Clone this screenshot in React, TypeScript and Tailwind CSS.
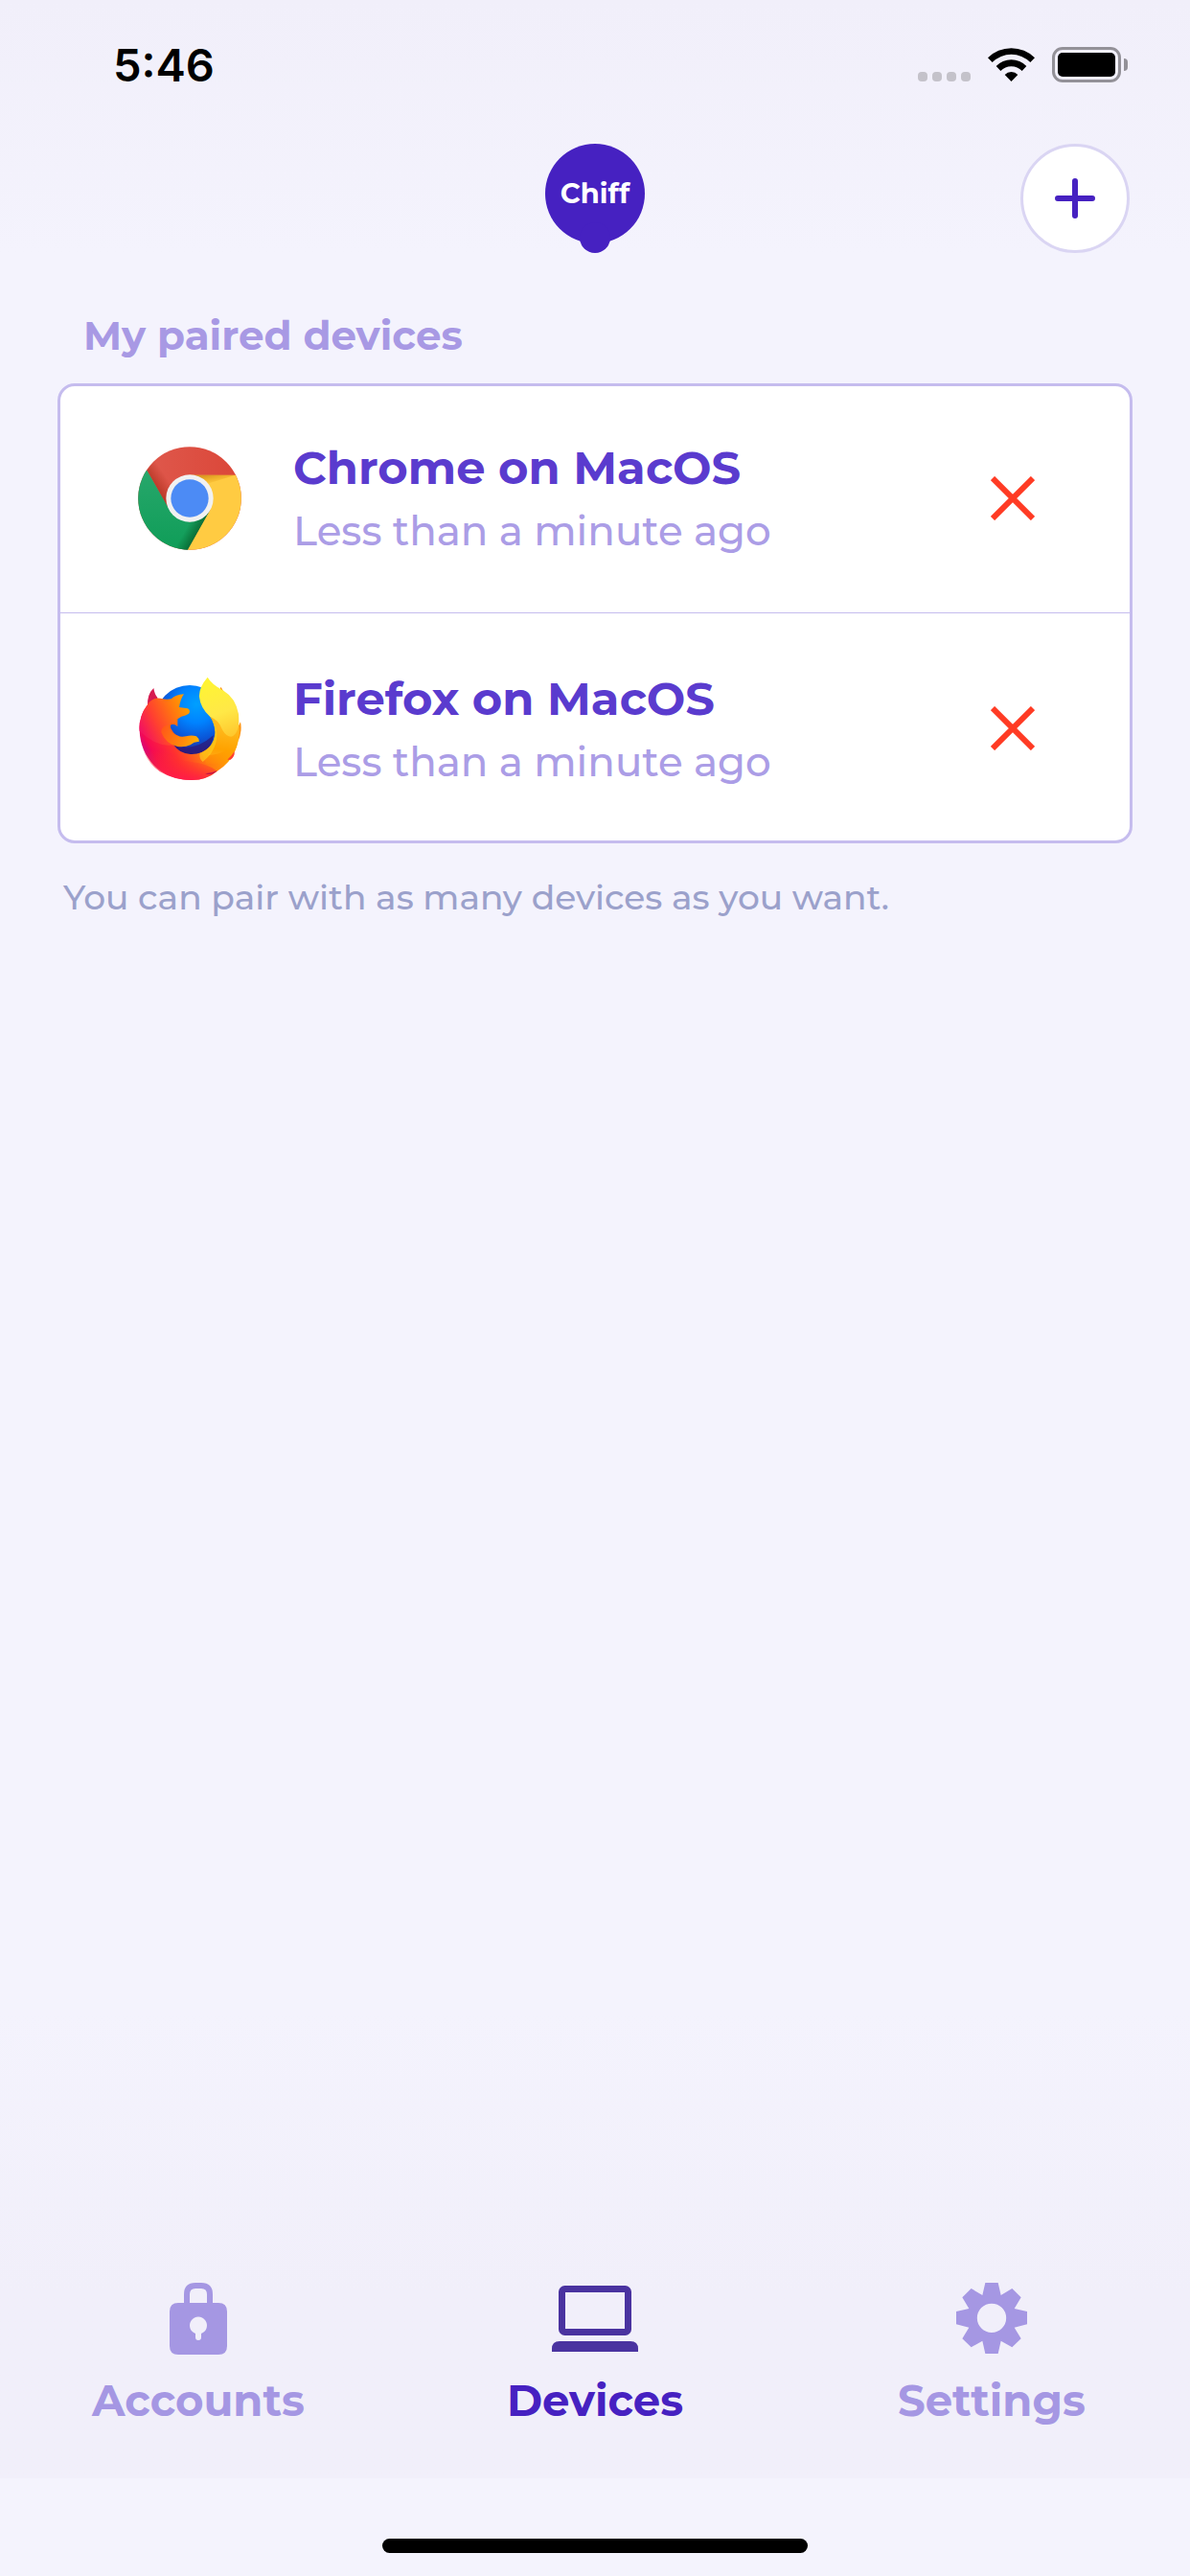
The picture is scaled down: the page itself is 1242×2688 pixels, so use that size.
import React from "react";

function WifiIcon() {
  return (
    <svg aria-hidden="true" className="h-9 w-[49px]" viewBox="393 87 147 108">
      <path d="M393 121 A104 104 0 0 1 540 121 L526 135 A84 84 0 0 0 407 135 Z" />
      <path d="M419 147 A66 66 0 0 1 514 147 L500 162 A47 47 0 0 0 433 162 Z" />
      <path d="M446 174 A28 28 0 0 1 487 174 L466.500 195 Z" />
    </svg>
  );
}

function StatusBar() {
  return (
    <div className="flex h-[150px] items-start justify-between pt-[38px] pr-[65px] pl-[118px] font-[Inter,sans-serif] text-black">
      <time className="text-[47px] leading-[60px] font-semibold">5:46</time>
      <div className="flex items-start gap-[18px] pt-[11px]">
        <div className="flex h-9 items-end gap-[5px]">
          <span className="size-[10px] rounded-[4px] bg-[#c4c2ca]" />
          <span className="size-[10px] rounded-[4px] bg-[#c4c2ca]" />
          <span className="size-[10px] rounded-[4px] bg-[#c4c2ca]" />
          <span className="size-[10px] rounded-[4px] bg-[#c4c2ca]" />
        </div>
        <WifiIcon />
        <div className="flex items-center gap-[3px]">
          <div className="h-[37px] w-[72px] rounded-[11px] border-[3px] border-[#939198] p-[3px]">
            <div className="size-full rounded-[5px] bg-black" />
          </div>
          <div className="h-[13px] w-1 rounded-r-full bg-[#939198]" />
        </div>
      </div>
    </div>
  );
}

function Logo() {
  return (
    <div className="relative flex h-[114px] w-[104px] justify-center">
      <svg aria-hidden="true" className="absolute inset-0 size-full" viewBox="0 0 104 114" fill="#4621c1">
        <circle cx="52" cy="52" r="52" />
        <circle cx="52" cy="98" r="16" />
      </svg>
      <span className="relative text-[29px] leading-[104px] font-bold text-white [font-variant-ligatures:none]">Chiff</span>
    </div>
  );
}

function Header() {
  return (
    <header className="grid grid-cols-3 items-center px-[63px]">
      <span />
      <div className="flex justify-center">
        <Logo />
      </div>
      <button
        type="button"
        aria-label="Pair a new device"
        className="flex size-[114px] items-center justify-center justify-self-end rounded-full border-[3px] border-[#dad5f3] bg-white"
      >
        <svg aria-hidden="true" className="size-[42px]" viewBox="0 0 42 42" stroke="#4621c1" strokeWidth="6" strokeLinecap="round">
          <path d="M21 3V39M3 21H39" />
        </svg>
      </button>
    </header>
  );
}

function ChromeIcon() {
  return (
    <svg aria-hidden="true" className="size-[108px]" viewBox="312 228 324 324">
      <defs>
        <clipPath id="chrome-disc">
          <circle cx="474" cy="390" r="161.500" />
        </clipPath>
        <linearGradient id="chrome-red-shade" gradientUnits="userSpaceOnUse" x1="368" y1="366" x2="410" y2="338">
          <stop offset="0" stopColor="#a52714" stopOpacity="0.7" />
          <stop offset="1" stopColor="#a52714" stopOpacity="0" />
        </linearGradient>
        <linearGradient id="chrome-green-shade" gradientUnits="userSpaceOnUse" x1="502" y1="490" x2="470" y2="472">
          <stop offset="0" stopColor="#055524" stopOpacity="0.65" />
          <stop offset="1" stopColor="#055524" stopOpacity="0" />
        </linearGradient>
        <linearGradient id="chrome-yellow-shade" gradientUnits="userSpaceOnUse" x1="540" y1="316" x2="546" y2="348">
          <stop offset="0" stopColor="#c77b12" stopOpacity="0.65" />
          <stop offset="1" stopColor="#ea9a00" stopOpacity="0" />
        </linearGradient>
        <linearGradient id="chrome-red" x1="0" y1="0" x2="1" y2="0">
          <stop offset="0" stopColor="#df5a4e" />
          <stop offset="1" stopColor="#db4638" />
        </linearGradient>
        <linearGradient id="chrome-green" x1="0" y1="0" x2="0" y2="1">
          <stop offset="0" stopColor="#27a76b" />
          <stop offset="1" stopColor="#0f9d58" />
        </linearGradient>
      </defs>
      <g clipPath="url(#chrome-disc)">
        <rect x="312" y="228" width="324" height="324" fill="url(#chrome-red)" />
        <path d="M340 302L383 250L470 310L405 417Z" fill="url(#chrome-red-shade)" />
        <path d="M340 302L405 416L474 464L538 428L467 553H300V302Z" fill="url(#chrome-green)" />
        <path d="M538 428L467 553L380 552L450 440Z" fill="url(#chrome-green-shade)" />
        <path d="M474 317H640V560H463L538 427Z" fill="#ffcb42" />
        <path d="M474 317H617L530 344L510 360Z" fill="url(#chrome-yellow-shade)" />
      </g>
      <circle cx="474" cy="390" r="74" fill="#f1f1f1" />
      <circle cx="474" cy="390" r="59" fill="#4c8bf5" />
    </svg>
  );
}

function FirefoxIcon() {
  return (
    <svg aria-hidden="true" className="size-[108px]" viewBox="72 78 324 324">
      <defs>
        <radialGradient id="fox-globe" gradientUnits="userSpaceOnUse" cx="255" cy="165" r="165">
          <stop offset="0" stopColor="#00a0ff" />
          <stop offset="0.35" stopColor="#0083ff" />
          <stop offset="0.65" stopColor="#0a56d8" />
          <stop offset="1" stopColor="#2b2185" />
        </radialGradient>
        <linearGradient id="fox-body" gradientUnits="userSpaceOnUse" x1="100" y1="350" x2="350" y2="210">
          <stop offset="0" stopColor="#c4008c" />
          <stop offset="0.12" stopColor="#f50a52" />
          <stop offset="0.32" stopColor="#ff3030" />
          <stop offset="0.58" stopColor="#ff7a10" />
          <stop offset="0.82" stopColor="#ffa400" />
          <stop offset="1" stopColor="#ffb412" />
        </linearGradient>
        <linearGradient id="fox-head" gradientUnits="userSpaceOnUse" x1="80" y1="250" x2="225" y2="180">
          <stop offset="0" stopColor="#f20f62" />
          <stop offset="0.35" stopColor="#ff4030" />
          <stop offset="0.7" stopColor="#ff7212" />
          <stop offset="1" stopColor="#ff9a00" />
        </linearGradient>
        <linearGradient id="fox-bottom" gradientUnits="userSpaceOnUse" x1="215" y1="402" x2="225" y2="320">
          <stop offset="0" stopColor="#ff1a4a" />
          <stop offset="1" stopColor="#ff3a20" stopOpacity="0" />
        </linearGradient>
        <linearGradient id="fox-flame" gradientUnits="userSpaceOnUse" x1="290" y1="85" x2="360" y2="280">
          <stop offset="0" stopColor="#fff532" />
          <stop offset="0.55" stopColor="#ffe847" />
          <stop offset="1" stopColor="#ffc229" />
        </linearGradient>
        <linearGradient id="fox-arm" gradientUnits="userSpaceOnUse" x1="150" y1="240" x2="262" y2="285">
          <stop offset="0" stopColor="#ff5a18" />
          <stop offset="0.6" stopColor="#ff8a0a" />
          <stop offset="1" stopColor="#ffb400" />
        </linearGradient>
        <linearGradient id="fox-side" gradientUnits="userSpaceOnUse" x1="340" y1="240" x2="320" y2="370">
          <stop offset="0" stopColor="#ffb91c" />
          <stop offset="0.5" stopColor="#ffa200" />
          <stop offset="1" stopColor="#ff8a08" stopOpacity="0" />
        </linearGradient>
      </defs>
      <path d="M102 170Q100 134 121 114Q124 134 134 145L118 166Z" fill="#d61c50" />
      <path d="M327 130L331 110Q340 120 343 140ZM383 240L393 220Q399 248 386 280Z" fill="#ff9410" />
      <circle cx="234" cy="214" r="109" fill="url(#fox-globe)" />
      <path d="M180 290Q245 318 308 262Q300 322 240 324Q198 322 180 290Z" fill="#31106a" opacity="0.6" />
      <path
        d="M300 205Q330 260 298 296Q272 323 236 321Q200 318 184 292Q145 280 150 240L130 146Q108 152 98 172Q84 192 82 208Q74 225 77 248C80 330 140 400 240 402Q288 401 320 374Q360 350 376 310Q389 280 388 240L345 165Z"
        fill="url(#fox-body)"
      />
      <path
        d="M77 248Q78 330 140 375Q185 402 240 402Q288 401 320 374Q290 350 240 345Q165 335 140 290Z"
        fill="url(#fox-bottom)"
      />
      <path
        d="M98 172Q114 142 143 146Q160 151 176 148Q190 134 216 133Q205 148 201 174L228 178Q238 184 231 194Q222 200 208 203L196 211L196 234Q184 224 175 229Q170 235 180 248Q184 258 202 265Q172 292 184 292Q130 300 77 248Q75 202 98 172Z"
        fill="url(#fox-head)"
      />
      <path
        d="M145 252Q146 228 175 229Q168 240 182 256Q200 270 222 265Q240 260 255 265Q264 272 263 282Q250 280 236 292Q218 300 196 297Q158 288 145 252Z"
        fill="url(#fox-arm)"
      />
      <path
        d="M290 80Q262 112 264 142Q268 178 298 204Q325 222 318 270Q310 305 290 325Q360 320 383 268Q390 235 387 195Q378 145 340 122Q302 102 290 80Z"
        fill="url(#fox-flame)"
      />
      <path
        d="M298 204Q324 214 334 240Q346 266 364 266Q380 262 388 232Q392 275 376 310Q360 338 335 352L285 350L272 318Q308 300 314 256Q314 224 298 204Z"
        fill="url(#fox-side)"
      />
      <path d="M303 212Q326 240 316 285Q308 318 275 345Q262 335 266 318Q300 304 309 276Q320 245 303 212Z" fill="#ffd41f" opacity="0.6" />
      <path d="M352 338Q366 326 374 312Q376 328 362 338Z" fill="#ff3f2e" />
      <path d="M282 382Q305 380 320 372Q308 386 290 384Z" fill="#c41245" />
    </svg>
  );
}

type Device = { name: string; seen: string; icon: React.ReactNode };

const devices: Device[] = [
  { name: "Chrome on MacOS", seen: "Less than a minute ago", icon: <ChromeIcon /> },
  { name: "Firefox on MacOS", seen: "Less than a minute ago", icon: <FirefoxIcon /> },
];

function DeviceRow({ device }: { device: Device }) {
  return (
    <li className="flex h-[237px] items-center pr-[90px] pl-[81px] first:pb-[3px] last:pt-[3px]">
      {device.icon}
      <div className="ml-[54px] flex-1 pt-[3px]">
        <h2 className="text-[48px] leading-[66px] font-bold text-[#5a3bce]">{device.name}</h2>
        <p className="text-[42px] leading-[66px] font-medium text-[#ab9de6]">{device.seen}</p>
      </div>
      <button type="button" aria-label={`Remove ${device.name}`} className="flex size-16 items-center justify-center">
        <svg aria-hidden="true" className="size-[46px]" viewBox="0 0 46 46" stroke="#ff3b24" strokeWidth="6">
          <path d="M2 2L44 44M44 2L2 44" />
        </svg>
      </button>
    </li>
  );
}

function LockIcon() {
  return (
    <svg aria-hidden="true" className="h-[75px] w-[60px]" viewBox="0 0 60 75">
      <path d="M18 24V12Q18 3 27 3H33Q42 3 42 12V24" fill="none" stroke="#a597e3" strokeWidth="6" />
      <path
        fill="#a597e3"
        fillRule="evenodd"
        d="M9 21H51Q60 21 60 30V66Q60 75 51 75H9Q0 75 0 66V30Q0 21 9 21ZM27 53V57A3 3 0 0 0 33 57V53A9 9 0 1 0 27 53Z"
      />
    </svg>
  );
}

function LaptopIcon() {
  return (
    <svg aria-hidden="true" className="h-[75px] w-[90px]" viewBox="0 0 90 75">
      <rect x="10.500" y="6.500" width="69" height="45" rx="3" fill="none" stroke="#4a33a0" strokeWidth="7" />
      <path d="M0 72V69Q0 61 8 61H82Q90 61 90 69V72Z" fill="#4a33a0" />
    </svg>
  );
}

function GearIcon() {
  return (
    <svg aria-hidden="true" className="h-[75px] w-[74px]" viewBox="291 126 222 225">
      <path
        fill="#a597e3"
        fillRule="evenodd"
        d="M382 126H422L431 165L466 144L494 172L473 207L513 216V256L473 266L494 301L466 328L431 308L422 348H382L373 308L338 328L310 301L331 266L291 256V216L331 207L310 172L338 144L373 165ZM402 191A45.500 45.500 0 1 0 402 282A45.500 45.500 0 1 0 402 191Z"
      />
    </svg>
  );
}

function TabBar() {
  return (
    <nav className="grid h-[486px] grid-cols-3 items-end bg-linear-to-b from-[#f4f3fd] to-[#f1effa] to-60% pb-[49px] text-[45px] leading-[64px] font-bold">
      <a href="#accounts" className="flex flex-col items-center gap-4 text-[#a597e3]">
        <LockIcon />
        Accounts
      </a>
      <a href="#devices" aria-current="page" className="flex flex-col items-center gap-4 text-[#4621c1]">
        <LaptopIcon />
        Devices
      </a>
      <a href="#settings" className="flex flex-col items-center gap-4 text-[#a597e3]">
        <GearIcon />
        Settings
      </a>
    </nav>
  );
}

export default function App() {
  return (
    <div className="flex min-h-screen flex-col bg-[#f4f3fd] font-['Montserrat',Inter,sans-serif]">
      <div className="bg-linear-to-b from-[#f1effa] to-[#f4f3fd]">
        <StatusBar />
        <Header />
      </div>
      <main className="flex-1 px-[60px] pt-[54px]">
        <h1 className="px-[27px] text-[42px] leading-[64px] font-bold text-[#a899e4]">My paired devices</h1>
        <ul className="mt-[18px] divide-y divide-[#c5bcee] rounded-[18px] border-[3px] border-[#c5bcee] bg-white">
          {devices.map((device) => (
            <DeviceRow key={device.name} device={device} />
          ))}
        </ul>
        <p className="mt-6 px-[6px] text-[36px] leading-[64px] font-medium text-[#9ba1cb]">
          You can pair with as many devices as you want.
        </p>
      </main>
      <TabBar />
      <div className="flex h-[102px] items-end justify-center pb-6">
        <div className="h-[15px] w-[444px] rounded-full bg-black" />
      </div>
    </div>
  );
}
